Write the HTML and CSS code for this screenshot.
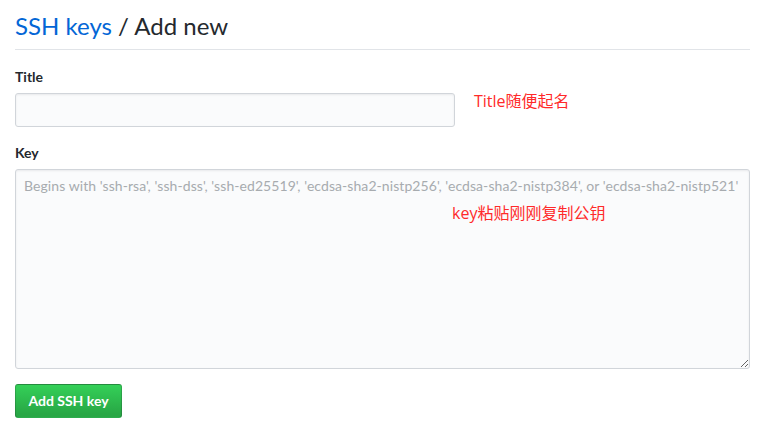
FILE: index.html
```html
<!DOCTYPE html>
<html lang="en">
<head>
  <meta charset="UTF-8">
  <meta name="viewport" content="width=device-width, initial-scale=1.0">
  <title>SSH keys / Add new</title>
  <link rel="stylesheet" href="styles.css">
</head>
<body>
  <div class="wrap">
    <div class="subhead">
      <h2><a href="##">SSH keys</a> / Add new</h2>
    </div>
    <form action="">
      <dl class="form-group">
        <dt><label for="title">Title</label></dt>
        <dd>
          <input id="title" class="form-control short" type="text">
          <span class="note note-title">Title随便起名</span>
        </dd>
      </dl>
      <dl class="form-group">
        <dt><label for="key">Key</label></dt>
        <dd>
          <textarea id="key" class="form-control" placeholder="Begins with 'ssh-rsa', 'ssh-dss', 'ssh-ed25519', 'ecdsa-sha2-nistp256', 'ecdsa-sha2-nistp384', or 'ecdsa-sha2-nistp521'"></textarea>
          <span class="note note-key">key粘贴刚刚复制公钥</span>
        </dd>
      </dl>
      <button class="btn" type="submit">Add SSH key</button>
    </form>
  </div>
</body>
</html>
```

FILE: styles.css
```css
* {
  margin: 0;
  padding: 0;
  box-sizing: border-box;
}
body {
  font-family: "Lato", "Noto Sans CJK SC", sans-serif;
  font-size: 14px;
  color: #24292e;
  background-color: #fff;
}
.wrap {
  padding: 10px 28px 0 15px;
}
.subhead {
  border-bottom: 1px solid #e1e4e8;
  padding-bottom: 7px;
}
.subhead h2 {
  font-size: 24px;
  font-weight: normal;
  line-height: 32px;
}
.subhead a {
  color: #0366d6;
  text-decoration: none;
}
.form-group {
  margin-top: 17px;
}
.form-group + .form-group {
  margin-top: 16px;
}
.form-group dt {
  margin-bottom: 6px;
}
.form-group label {
  font-weight: bold;
  font-size: 14px;
  line-height: 20px;
}
.form-group dd {
  position: relative;
}
.form-control {
  display: block;
  width: 100%;
  padding: 6px 8px;
  font-family: inherit;
  font-size: 14px;
  line-height: 20px;
  color: #24292e;
  background-color: #fafbfc;
  border: 1px solid #d1d5da;
  border-radius: 3px;
  box-shadow: inset 0 1px 2px rgba(27, 31, 35, 0.075);
}
.form-control.short {
  width: 440px;
  height: 34px;
}
textarea.form-control {
  height: 200px;
  resize: vertical;
}
textarea::placeholder {
  color: #a7abaf;
  letter-spacing: 0.07px;
}
.note {
  position: absolute;
  color: #ff2a2a;
  font-family: "Open Sans", "Noto Sans CJK SC", sans-serif;
  font-size: 16px;
  white-space: nowrap;
}
.note-title {
  left: 459px;
  top: -5px;
}
.note-key {
  left: 437px;
  top: 31px;
}
.btn {
  margin-top: 15px;
  padding: 6px 12px;
  font-family: inherit;
  font-size: 14px;
  font-weight: bold;
  line-height: 20px;
  color: #fff;
  background-image: linear-gradient(-180deg, #34d058 0%, #28a745 90%);
  border: 1px solid rgba(27, 31, 35, 0.2);
  border-radius: 3px;
  height: 34px;
  width: 107px;
}
```
